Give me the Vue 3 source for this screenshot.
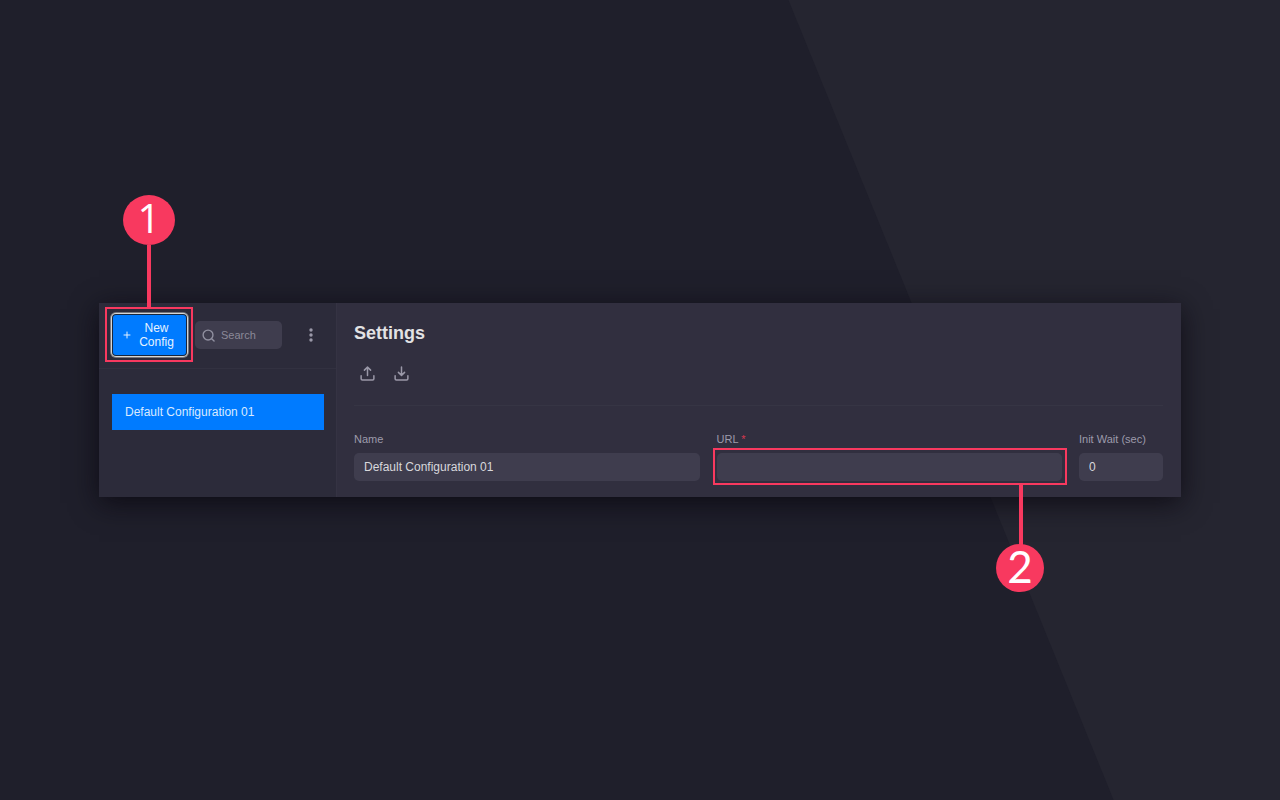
<script setup>
import { ref } from 'vue';

const configs = ref([{ id: 1, name: 'Default Configuration 01', url: '', initWait: '0' }]);
const current = ref(configs.value[0]);
const search = ref('');
</script>

<template>
    <div class="stage">
        <div class="panel">
            <aside class="sidebar">
                <div class="sidebar-header">
                    <div class="new-wrap">
                        <button type="button" class="new-button">
                            <svg class="plus" viewBox="0 0 8 8" aria-hidden="true">
                                <path d="M4 1v6M1 4h6" />
                            </svg>
                            <span class="new-label">New Config</span>
                        </button>
                        <!-- Step 1 -->
                        <div class="callout callout-new">
                            <span class="line"></span>
                            <span class="badge badge-one">1</span>
                        </div>
                    </div>
                    <label class="search">
                        <svg class="search-icon" viewBox="0 0 14 14" aria-hidden="true">
                            <circle cx="6.5" cy="6.5" r="5.3" />
                            <path d="M10.4 10.4L13 13" />
                        </svg>
                        <input v-model="search" class="search-input" type="text" placeholder="Search" aria-label="Search" />
                    </label>
                    <button type="button" class="icon-button menu-button" aria-label="More">
                        <svg class="dots" viewBox="0 0 4 14" aria-hidden="true">
                            <circle cx="2" cy="2" r="1.7" />
                            <circle cx="2" cy="7" r="1.7" />
                            <circle cx="2" cy="12" r="1.7" />
                        </svg>
                    </button>
                </div>
                <nav class="config-list">
                    <button v-for="config in configs" :key="config.id" type="button" class="config-item" @click="current = config">
                        {{ config.name }}
                    </button>
                </nav>
            </aside>

            <main class="settings">
                <h2 class="title">Settings</h2>
                <div class="toolbar">
                    <button type="button" class="icon-button" aria-label="Export">
                        <svg class="tool-icon" viewBox="0 0 16 16" aria-hidden="true">
                            <path d="M1.2 10.5v3a1.3 1.3 0 0 0 1.3 1.3h11a1.3 1.3 0 0 0 1.3-1.3v-3" />
                            <path d="M8 10V1.5M4.7 4.4L8 1.2l3.3 3.2" />
                        </svg>
                    </button>
                    <button type="button" class="icon-button" aria-label="Import">
                        <svg class="tool-icon" viewBox="0 0 16 16" aria-hidden="true">
                            <path d="M1.2 10.5v3a1.3 1.3 0 0 0 1.3 1.3h11a1.3 1.3 0 0 0 1.3-1.3v-3" />
                            <path d="M8 1v8.8M4.7 6.8L8 10l3.3-3.2" />
                        </svg>
                    </button>
                </div>
                <form class="form" @submit.prevent>
                    <div class="field">
                        <label for="name">Name</label>
                        <input id="name" v-model="current.name" type="text" />
                    </div>
                    <div class="field">
                        <label for="url">URL <span class="required">*</span></label>
                        <div class="url-wrap">
                            <input id="url" v-model="current.url" type="text" />
                            <!-- Step 2 -->
                            <div class="callout callout-url">
                                <span class="line"></span>
                                <span class="badge badge-two">2</span>
                            </div>
                        </div>
                    </div>
                    <div class="field">
                        <label for="wait">Init Wait (sec)</label>
                        <input id="wait" v-model="current.initWait" type="text" />
                    </div>
                </form>
            </main>
        </div>
    </div>
</template>

<style>
body {
    background: #1f1f2b;
}
</style>

<style scoped>
.stage {
    position: relative;
    display: flex;
    align-items: center;
    box-sizing: border-box;
    min-height: 100vh;
    padding: 24px 99px;
    background: #1f1f2b;
    font-family: "Liberation Sans", Arial, sans-serif;
}

/* Lighter slanted area on the right */
.stage::before {
    content: '';
    position: absolute;
    inset: 0;
    background: #252530;
    clip-path: polygon(61.6% 0, 100% 0, 100% 100%, 87% 100%);
}

.panel {
    position: relative;
    display: flex;
    flex: 1;
    min-width: 0;
    background: #312f3f;
    box-shadow: 0 6px 26px rgba(8, 6, 14, 0.75);
}

button,
input {
    box-sizing: border-box;
    margin: 0;
    border: 0;
    font-family: inherit;
}

svg {
    fill: none;
    stroke: currentColor;
    stroke-linecap: round;
    stroke-linejoin: round;
}

.sidebar {
    box-sizing: border-box;
    width: 238px;
    flex-shrink: 0;
    background: #2c2b3a;
    border-right: 1px solid #353343;
}

.sidebar-header {
    display: flex;
    align-items: center;
    padding: 12px 11px 13px 14px;
    border-bottom: 1px solid #323140;
}

.new-wrap,
.url-wrap {
    position: relative;
}

.new-button {
    display: flex;
    align-items: center;
    gap: 6px;
    width: 73px;
    height: 40px;
    padding: 0 10px;
    border-radius: 3px;
    background: #007bff;
    color: #e6f2ff;
    font-size: 12px;
    line-height: 14px;
    box-shadow: 0 0 0 1px #17263d, 0 0 0 2px #d6d6d6, 0 0 0 3px #77767c;
}

.plus {
    width: 8px;
    height: 8px;
    flex-shrink: 0;
}

.new-label {
    flex: 1;
    text-align: center;
}

.search {
    display: flex;
    align-items: center;
    gap: 6px;
    flex: 1;
    min-width: 0;
    height: 28px;
    margin-left: 9px;
    padding: 0 7px;
    box-sizing: border-box;
    border-radius: 5px;
    background: #3f3d4e;
    color: #9190a0;
}

.search-icon {
    width: 13px;
    height: 13px;
    flex-shrink: 0;
    stroke-width: 1.5;
}

.search-input {
    width: 100%;
    min-width: 0;
    padding: 0;
    background: none;
    color: #d2d2d8;
    font-size: 11px;
    outline: none;
}

.search-input::placeholder {
    color: #8b8998;
    opacity: 1;
}

.icon-button {
    display: flex;
    align-items: center;
    justify-content: center;
    width: 26px;
    height: 28px;
    padding: 0;
    background: none;
    color: #9a98a8;
}

.menu-button {
    width: 28px;
    margin-left: 15px;
}

.dots {
    width: 4px;
    height: 14px;
    fill: currentColor;
    stroke: none;
}

.config-list {
    padding: 25px 12px 25px 13px;
}

.config-item {
    display: block;
    width: 100%;
    height: 36px;
    padding: 0 13px;
    background: #007bff;
    color: #d9eaff;
    font-size: 12px;
    text-align: left;
}

.settings {
    flex: 1;
    min-width: 0;
    padding: 20px 18px 16px 17px;
}

.title {
    margin: 0;
    color: #e2e2e4;
    font-size: 18px;
    line-height: 20px;
}

.toolbar {
    display: flex;
    gap: 8px;
    padding: 16px 0 18px;
    border-bottom: 1px solid #363544;
}

.tool-icon {
    width: 15px;
    height: 15px;
    stroke-width: 1.6;
}

.form {
    display: grid;
    grid-template-columns: 1fr 1fr 84px;
    gap: 17px;
    padding-top: 26px;
}

.field label {
    display: block;
    margin-bottom: 7px;
    color: #9d9bab;
    font-size: 11px;
    line-height: 14px;
}

.required {
    color: #d8384f;
}

.field input {
    display: block;
    width: 100%;
    height: 28px;
    padding: 0 10px;
    border-radius: 5px;
    background: #3f3d4e;
    color: #d8d8dc;
    font-size: 12px;
}

/* Numbered markers laid over the panel */
.callout {
    position: absolute;
    border: 2px solid #f8395f;
    pointer-events: none;
}

.callout-new {
    inset: -8px -7px -7px -8px;
}

.callout-url {
    inset: -5px -5px -4px -4px;
}

.line {
    position: absolute;
    width: 4px;
    height: 64px;
    background: #f8395f;
}

.badge {
    position: absolute;
    display: flex;
    align-items: center;
    justify-content: center;
    box-sizing: border-box;
    padding-bottom: 4px;
    border-radius: 50%;
    background: #f8395f;
    color: #ffffff;
}

.callout-new .line {
    left: calc(50% - 2px);
    bottom: 100%;
}

.badge-one {
    left: calc(50% - 26px);
    bottom: calc(100% + 64px);
    width: 52px;
    height: 50px;
    font-family: "Open Sans", sans-serif;
    font-size: 40px;
    line-height: 46px;
}

.callout-url .line {
    right: 42px;
    top: 100%;
}

.badge-two {
    right: 21px;
    top: calc(100% + 61px);
    width: 48px;
    height: 48px;
    font-family: Lato, sans-serif;
    font-size: 44px;
    line-height: 44px;
}
</style>
